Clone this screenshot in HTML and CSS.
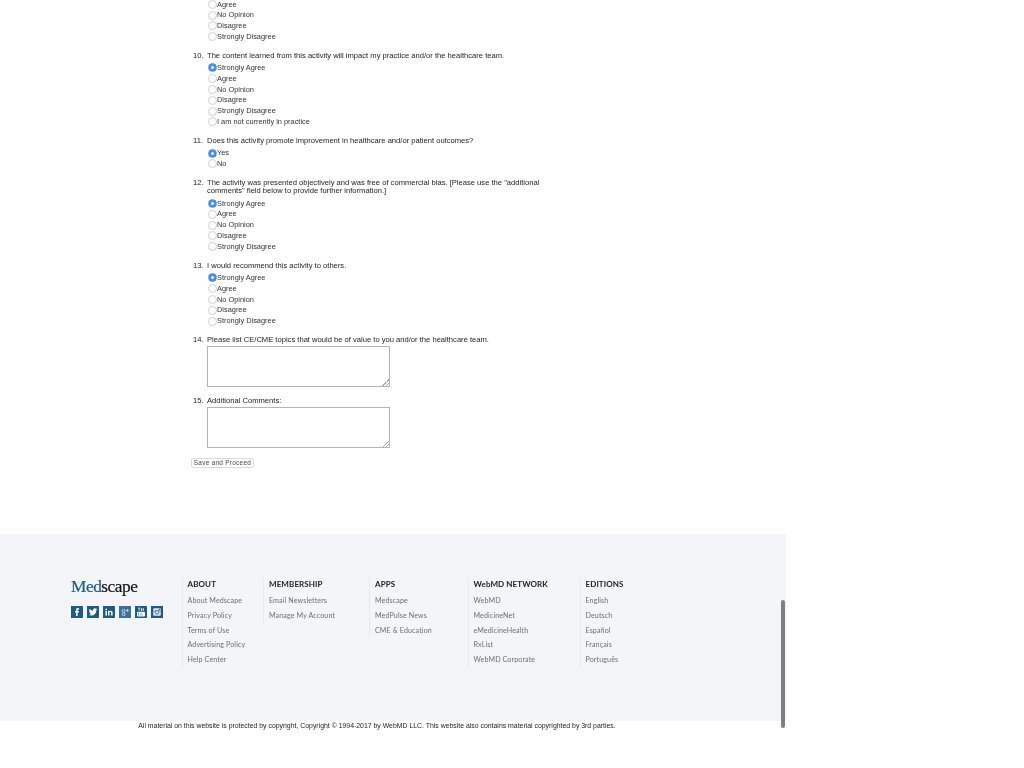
FILE: index.html
```html
<!DOCTYPE html>
<html lang="en">
<head>
<meta charset="utf-8">
<title>Activity Evaluation</title>
<link rel="stylesheet" href="styles.css">
</head>
<body>
<main class="survey">
  <ul class="opts first">
    <li><input type="radio" name="q9"><label>Agree</label></li>
    <li><input type="radio" name="q9"><label>No Opinion</label></li>
    <li><input type="radio" name="q9"><label>Disagree</label></li>
    <li><input type="radio" name="q9"><label>Strongly Disagree</label></li>
  </ul>
  <section class="q">
    <div class="qt"><span class="n">10.</span><p>The content learned from this activity will impact my practice and/or the healthcare team.</p></div>
    <ul class="opts">
      <li><input type="radio" name="q10" checked><label>Strongly Agree</label></li>
      <li><input type="radio" name="q10"><label>Agree</label></li>
      <li><input type="radio" name="q10"><label>No Opinion</label></li>
      <li><input type="radio" name="q10"><label>Disagree</label></li>
      <li><input type="radio" name="q10"><label>Strongly Disagree</label></li>
      <li><input type="radio" name="q10"><label>I am not currently in practice</label></li>
    </ul>
  </section>
  <section class="q">
    <div class="qt"><span class="n">11.</span><p>Does this activity promote improvement in healthcare and/or patient outcomes?</p></div>
    <ul class="opts">
      <li><input type="radio" name="q11" checked><label>Yes</label></li>
      <li><input type="radio" name="q11"><label>No</label></li>
    </ul>
  </section>
  <section class="q">
    <div class="qt"><span class="n">12.</span><p>The activity was presented objectively and was free of commercial bias. [Please use the "additional comments" field below to provide further information.]</p></div>
    <ul class="opts">
      <li><input type="radio" name="q12" checked><label>Strongly Agree</label></li>
      <li><input type="radio" name="q12"><label>Agree</label></li>
      <li><input type="radio" name="q12"><label>No Opinion</label></li>
      <li><input type="radio" name="q12"><label>Disagree</label></li>
      <li><input type="radio" name="q12"><label>Strongly Disagree</label></li>
    </ul>
  </section>
  <section class="q">
    <div class="qt"><span class="n">13.</span><p>I would recommend this activity to others.</p></div>
    <ul class="opts">
      <li><input type="radio" name="q13" checked><label>Strongly Agree</label></li>
      <li><input type="radio" name="q13"><label>Agree</label></li>
      <li><input type="radio" name="q13"><label>No Opinion</label></li>
      <li><input type="radio" name="q13"><label>Disagree</label></li>
      <li><input type="radio" name="q13"><label>Strongly Disagree</label></li>
    </ul>
  </section>
  <section class="q q-text">
    <div class="qt"><span class="n">14.</span><p>Please list CE/CME topics that would be of value to you and/or the healthcare team.</p></div>
    <textarea class="ta"></textarea>
  </section>
  <section class="q q-text q-last">
    <div class="qt"><span class="n">15.</span><p>Additional Comments:</p></div>
    <textarea class="ta"></textarea>
  </section>
  <button class="save" type="button">Save and Proceed</button>
</main>

<footer class="foot">
  <div class="brand">
    <div class="logo"><span class="med">Med</span>scape</div>
    <div class="social">
      <a class="si"><svg viewBox="0 0 12 12"><path fill="#fff" d="M6.6 10V6.4h1.2l.2-1.4H6.6v-.8c0-.4.1-.7.7-.7H8V2.2C7.800 2.200 7.400 2.100 6.900 2.100 5.800 2.100 5.100 2.800 5.100 4V5H4v1.400h1.100V10z"/></svg></a>
      <a class="si"><svg viewBox="0 0 12 12"><path fill="#fff" d="M10.500 3.300c-.3.100-.7.200-1 .3.400-.2.600-.6.800-1-.3.200-.7.300-1.100.4a1.800 1.800 0 0 0-3.100 1.600C4.600 4.500 3.300 3.800 2.400 2.700c-.5.800-.2 1.800.5 2.400-.3 0-.6-.1-.8-.2 0 .9.600 1.600 1.400 1.800-.3.100-.5.100-.8 0 .2.700.9 1.200 1.700 1.300-.8.600-1.700.9-2.700.8 2.800 1.800 7.500.5 7.500-4.600.5-.2.900-.5 1.300-.9z"/></svg></a>
      <a class="si"><svg viewBox="0 0 12 12"><path fill="#fff" d="M2.500 4.800h1.500V9.500H2.500zM3.250 2.400a.85.85 0 1 1 0 1.700.85.85 0 0 1 0-1.700zM5 4.800h1.400v.7c.3-.5.800-.8 1.500-.8 1.200 0 1.700.8 1.700 2.100v2.700H8.100V7.100c0-.6-.2-1.100-.8-1.100S6.500 6.500 6.500 7.100v2.400H5z"/></svg></a>
      <a class="si si-g"><svg viewBox="0 0 12 12"><circle cx="4.600" cy="4.800" r="1.500" fill="none" stroke="#cfdbe6" stroke-width=".9"/><circle cx="4.700" cy="8.200" r="1.500" fill="none" stroke="#cfdbe6" stroke-width=".9"/><path stroke="#cfdbe6" stroke-width=".8" d="M8.500 3v3M7 4.500h3"/></svg></a>
      <a class="si"><svg viewBox="0 0 12 12"><rect x="2" y="5.800" width="8" height="4.700" rx="1" fill="#fff"/><path fill="#fff" d="M3 1.500h.7l.5 1.300.5-1.300h.7L4.500 3.300v1.400h-.7V3.300zM6 2.300h1v2.400H6zM7.800 2.300h1v2.400h-1z"/><path stroke="#1e5a84" stroke-width=".5" d="M3.500 7v2.800M2.900 7h1.200M5.300 7.600v2M7 7v2.600"/></svg></a>
      <a class="si"><svg viewBox="0 0 12 12"><rect x="2.200" y="2.200" width="7.600" height="7.600" rx="1" fill="#dfe8ef"/><rect x="2.200" y="4.700" width="7.600" height=".6" fill="#1e5a84"/><circle cx="6" cy="6.300" r="1.800" fill="#dfe8ef" stroke="#1e5a84" stroke-width=".8"/><rect x="7.800" y="2.900" width="1.300" height="1.300" fill="#1e5a84"/></svg></a>
    </div>
  </div>
  <nav class="cols">
    <div class="col c1"><h4>ABOUT</h4><a>About Medscape</a><a>Privacy Policy</a><a>Terms of Use</a><a>Advertising Policy</a><a>Help Center</a></div>
    <div class="col c2"><h4>MEMBERSHIP</h4><a>Email Newsletters</a><a>Manage My Account</a></div>
    <div class="col c3"><h4>APPS</h4><a>Medscape</a><a>MedPulse News</a><a>CME &amp; Education</a></div>
    <div class="col c4"><h4>WebMD NETWORK</h4><a>WebMD</a><a>MedicineNet</a><a>eMedicineHealth</a><a>RxList</a><a>WebMD Corporate</a></div>
    <div class="col c5"><h4>EDITIONS</h4><a>English</a><a>Deutsch</a><a>Español</a><a>Français</a><a>Português</a></div>
  </nav>
</footer>
<p class="copy">All material on this website is protected by copyright, Copyright © 1994-2017 by WebMD LLC. This website also contains material copyrighted by 3rd parties.</p>
<div class="thumb"></div>
</body>
</html>
```
FILE: styles.css
```css
* { box-sizing: border-box; }
html, body { margin: 0; padding: 0; height: 768px; overflow: hidden; background: #fff; }
body { font-family: "Liberation Sans", Arial, sans-serif; color: #222; font-size: 7.6px; position: relative; width: 1024px; }
.survey, .foot, .copy { filter: blur(.25px); }
.survey { width: 786px; height: 534.500px; margin-top: -.5px; padding-left: 191px; }
.opts { list-style: none; margin: 0; padding: 0 0 0 17px; }
.opts li { display: flex; align-items: center; height: 10.8px; line-height: 10.8px; font-size: 7.4px; }
.opts input { appearance: none; -webkit-appearance: none; width: 9px; height: 9px; margin: -1px 0 0; flex: none; border-radius: 50%; border: .7px solid #cfcfcf; background: #fdfdfd; }
.opts input:checked { border: 1px solid #4a8fe6; background: radial-gradient(circle, #fff 0, #fff 1.100px, #4a8fe6 1.600px); }
.opts label { color: #333; }
.q { margin-top: 9px; }
.qt { display: flex; line-height: 8.4px; margin-bottom: 3px; color: #222; }
.q-text .qt { margin-bottom: 2px; }
.n { width: 16px; padding-left: 2px; flex: none; }
.qt p { margin: 0; width: 336px; }
.ta { display: block; width: 183px; height: 41px; margin: 0 0 0 16px; border: 1px solid #b4b4b4; background: #fff; padding: 0; }
.ta::-webkit-resizer { background: linear-gradient(135deg, transparent 50%, #aaa 50%, #aaa 60%, transparent 60%, transparent 72%, #aaa 72%, #aaa 82%, transparent 82%) right bottom / 7px 7px no-repeat; }
.q-last { margin-top: 9.500px; }
.save { display: block; width: 63px; height: 10px; margin: 10px 0 0; padding: 0; border: 1px solid #dadada; border-radius: 2px; background: #fff; font: 6.4px/8px "Liberation Sans", Arial, sans-serif; letter-spacing: .3px; color: #444; }
.foot { width: 786px; height: 187px; background: #f4f5f9; display: flex; padding: 44px 0 0 71px; }
.brand { width: 110.500px; flex: none; }
.logo { font-family: "Liberation Serif", serif; font-size: 17.300px; line-height: 17px; letter-spacing: -.45px; color: #111; -webkit-text-stroke: .2px currentColor; }
.med { color: #1e5a84; }
.social { display: flex; gap: 4px; margin-top: 11px; }
.si { display: block; width: 12px; height: 12px; background: #1e5a84; }
.si svg { display: block; width: 12px; height: 12px; }
.si-g { background: #3b7099; }
.cols { display: flex; align-items: flex-start; }
.col { border-left: 1px solid #e8e9ee; padding-left: 5px; font-family: Lato, sans-serif; }
.col h4 { margin: 0 0 3px; font-size: 8px; line-height: 13px; font-weight: 700; color: #222; letter-spacing: .1px; }
.col a { display: block; height: 14.750px; line-height: 14.750px; font-size: 7.100px; color: #6e6e6e; letter-spacing: .12px; }
.c1 { width: 81.500px; }
.c2 { width: 106px; }
.c3 { width: 98.500px; }
.c4 { width: 112px; }
.c5 { width: 80px; }
.copy { width: 786px; margin: 0; padding-top: 1px; text-align: center; font-size: 6.900px; line-height: 8px; color: #222; padding-right: 32px; }
.thumb { position: absolute; left: 781px; top: 600px; width: 4px; height: 128px; border-radius: 2px; background: #7f7f7f; }
```
